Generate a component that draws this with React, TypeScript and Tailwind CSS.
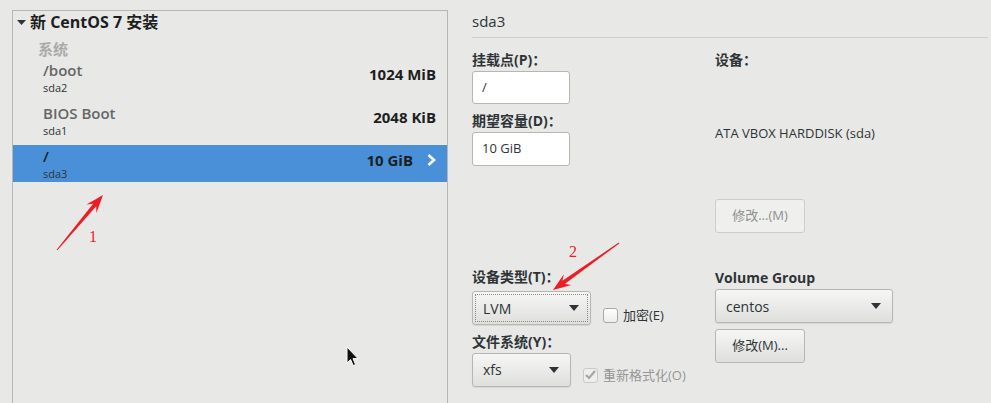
import React from "react";

const FONT = "font-['Open_Sans','Noto_Sans_CJK_SC',sans-serif]";

function arrowPoints(x1: number, y1: number, x2: number, y2: number) {
  const dx = x2 - x1;
  const dy = y2 - y1;
  const len = Math.hypot(dx, dy);
  const ux = dx / len;
  const uy = dy / len;
  const nx = -uy;
  const ny = ux;
  const p = (bx: number, by: number, along: number, side: number) =>
    `${(bx + ux * along + nx * side).toFixed(1)},${(by + uy * along + ny * side).toFixed(1)}`;
  return [
    p(x1, y1, 0, 0.5),
    p(x2, y2, -13, 2),
    p(x2, y2, -18, 6.5),
    p(x2, y2, 0, 0),
    p(x2, y2, -18, -6.5),
    p(x2, y2, -13, -2),
    p(x1, y1, 0, -0.5),
  ].join(" ");
}

function Caret() {
  return (
    <svg width="10" height="6" viewBox="0 0 10 6" className="shrink-0">
      <path d="M0 0 L10 0 L5 6 Z" fill="#2e3436" />
    </svg>
  );
}

function Combo({ label, w, focus }: { label: string; w: string; focus?: boolean }) {
  return (
    <div
      className={`${w} h-[34px] flex items-center pl-[10px] pr-[11px] rounded-[3px] border border-[#b6b6b3] bg-gradient-to-b from-[#f6f6f5] to-[#dfdfdc] text-[14px] shadow-[0_1px_1px_rgba(0,0,0,0.08)] ${
        focus ? "outline-1 outline-dotted outline-[#8a8a87] -outline-offset-4" : ""
      }`}
    >
      <span>{label}</span>
      <span className="ml-auto">
        <Caret />
      </span>
    </div>
  );
}

function Row({
  name,
  dev,
  size,
  selected,
}: {
  name: string;
  dev: string;
  size: string;
  selected?: boolean;
}) {
  return (
    <div className={`h-[37px] flex pr-[11px] ${selected ? "bg-[#4a90d9]" : ""}`}>
      <div className="pl-[30px] pt-[3px]">
        <div
          className={`text-[15px] leading-[16px] font-semibold ${
            selected ? "text-[#1c1f20]" : "text-[#656765]"
          }`}
        >
          {name}
        </div>
        <div className="mt-[4px] text-[11px] leading-[12px] text-[#2e3436]">{dev}</div>
      </div>
      <div className="ml-auto pt-[6px] flex items-start gap-[14px]">
        <span className="text-[15px] leading-[18px] font-bold text-[#1c1f20]">{size}</span>
        {selected && (
          <svg width="9" height="12" viewBox="0 0 9 12" className="mt-[3px]">
            <path d="M1.5 1 L7 6 L1.5 11" fill="none" stroke="#ffffff" strokeWidth="2.6" />
          </svg>
        )}
      </div>
    </div>
  );
}

function Check({ checked, disabled }: { checked?: boolean; disabled?: boolean }) {
  return (
    <div
      className={`w-[15px] h-[15px] rounded-[3px] border flex items-center justify-center ${
        disabled ? "border-[#c9c9c6] bg-[#eeeeec]" : "border-[#a8a8a5] bg-gradient-to-b from-[#ffffff] to-[#ececea]"
      }`}
    >
      {checked && (
        <svg width="11" height="10" viewBox="0 0 11 10">
          <path d="M1 5 L4 8 L10 1" fill="none" stroke="#a5a7a5" strokeWidth="2.2" />
        </svg>
      )}
    </div>
  );
}

export default function App() {
  return (
    <div
      className={`relative w-[991px] h-[403px] overflow-hidden bg-[#e8e8e7] flex text-[#2e3436] ${FONT}`}
    >
      {/* left tree */}
      <div className="w-[448px] shrink-0 pl-[12px] pt-[10px] flex flex-col">
        <div className="flex-1 border border-b-0 border-[#b6b6b3]">
          <div className="h-[22px] flex items-center pl-[4px] gap-[4px]">
            <svg width="9" height="5" viewBox="0 0 9 5">
              <path d="M0 0 L9 0 L4.5 5 Z" fill="#2e3436" />
            </svg>
            <span className="text-[16px] font-bold text-[#1c1f20]">新 CentOS 7 安装</span>
          </div>
          <div className="mt-[7px] pl-[25px] text-[15px] leading-[18px] font-bold text-[#aaaaa8]">系统</div>
          <div className="mt-[1px] flex flex-col gap-[6px]">
            <Row name="/boot" dev="sda2" size="1024 MiB" />
            <Row name="BIOS Boot" dev="sda1" size="2048 KiB" />
            <Row name="/" dev="sda3" size="10 GiB" selected />
          </div>
        </div>
      </div>

      {/* right details */}
      <div className="ml-[24px] pt-[12px] pr-[3px] flex-1">
        <div className="text-[15px] leading-[18px] pb-[7px] border-b border-[#cfcfcc]">sda3</div>
        <div className="flex">
          <div className="w-[243px] shrink-0 pt-[14px]">
            <div className="text-[14px] leading-[16px] font-bold">挂载点(P)：</div>
            <div className="mt-[3px] w-[98px] h-[33px] rounded-[3px] border border-[#b6b6b3] bg-white flex items-center pl-[9px] text-[13px]">
              /
            </div>
            <div className="mt-[9px] text-[14px] leading-[16px] font-bold">期望容量(D)：</div>
            <div className="mt-[3px] w-[98px] h-[34px] rounded-[3px] border border-[#b6b6b3] bg-white flex items-center pl-[9px] text-[13px]">
              10 GiB
            </div>

            <div className="mt-[103px] text-[14px] leading-[16px] font-bold">设备类型(T)：</div>
            <div className="mt-[6px] flex items-start">
              <Combo label="LVM" w="w-[119px]" focus />
              <div className="ml-[12px] mt-[15px] flex items-center gap-[5px] text-[13px]">
                <Check />
                <span>加密(E)</span>
              </div>
            </div>
            <div className="mt-[8px] text-[14px] leading-[16px] font-bold">文件系统(Y)：</div>
            <div className="mt-[3px] flex items-start">
              <Combo label="xfs" w="w-[99px]" />
              <div className="ml-[12px] mt-[13px] flex items-center gap-[5px] text-[13px] text-[#959795]">
                <Check checked disabled />
                <span>重新格式化(O)</span>
              </div>
            </div>
          </div>

          <div className="pt-[14px]">
            <div className="text-[14px] leading-[16px] font-bold">设备：</div>
            <div className="mt-[56px] text-[13px] leading-[18px]">ATA VBOX HARDDISK (sda)</div>
            <div className="mt-[57px] w-[90px] h-[34px] rounded-[3px] border border-[#cdcdca] bg-[#efefee] flex items-center justify-center text-[13px] text-[#8d908e]">
              修改...(M)
            </div>
            <div className="mt-[36px] text-[14px] leading-[18px] font-bold">Volume Group</div>
            <div className="mt-[2px]">
              <Combo label="centos" w="w-[178px]" />
            </div>
            <div className="mt-[6px] w-[90px] h-[34px] rounded-[3px] border border-[#b6b6b3] bg-gradient-to-b from-[#f6f6f5] to-[#dfdfdc] flex items-center justify-center text-[13px]">
              修改(M)...
            </div>
          </div>
        </div>
      </div>

      {/* annotations */}
      <svg className="absolute left-0 top-0 pointer-events-none" width="991" height="403">
        <polygon points={arrowPoints(57, 250, 103, 195)} fill="#ee1c25" />
        <polygon points={arrowPoints(619, 243, 553, 290)} fill="#ee1c25" />
        <text x="89" y="242" fontFamily="Liberation Serif, serif" fontSize="16" fill="#ee1c25">
          1
        </text>
        <text x="569" y="257" fontFamily="Liberation Serif, serif" fontSize="16" fill="#ee1c25">
          2
        </text>
        <path
          d="M347 347 L347 363 L350.6 359.6 L353.2 365.6 L355.6 364.6 L353 358.6 L358 358.6 Z"
          fill="#111"
          stroke="#fff"
          strokeWidth="1"
          strokeLinejoin="round"
        />
      </svg>
    </div>
  );
}
